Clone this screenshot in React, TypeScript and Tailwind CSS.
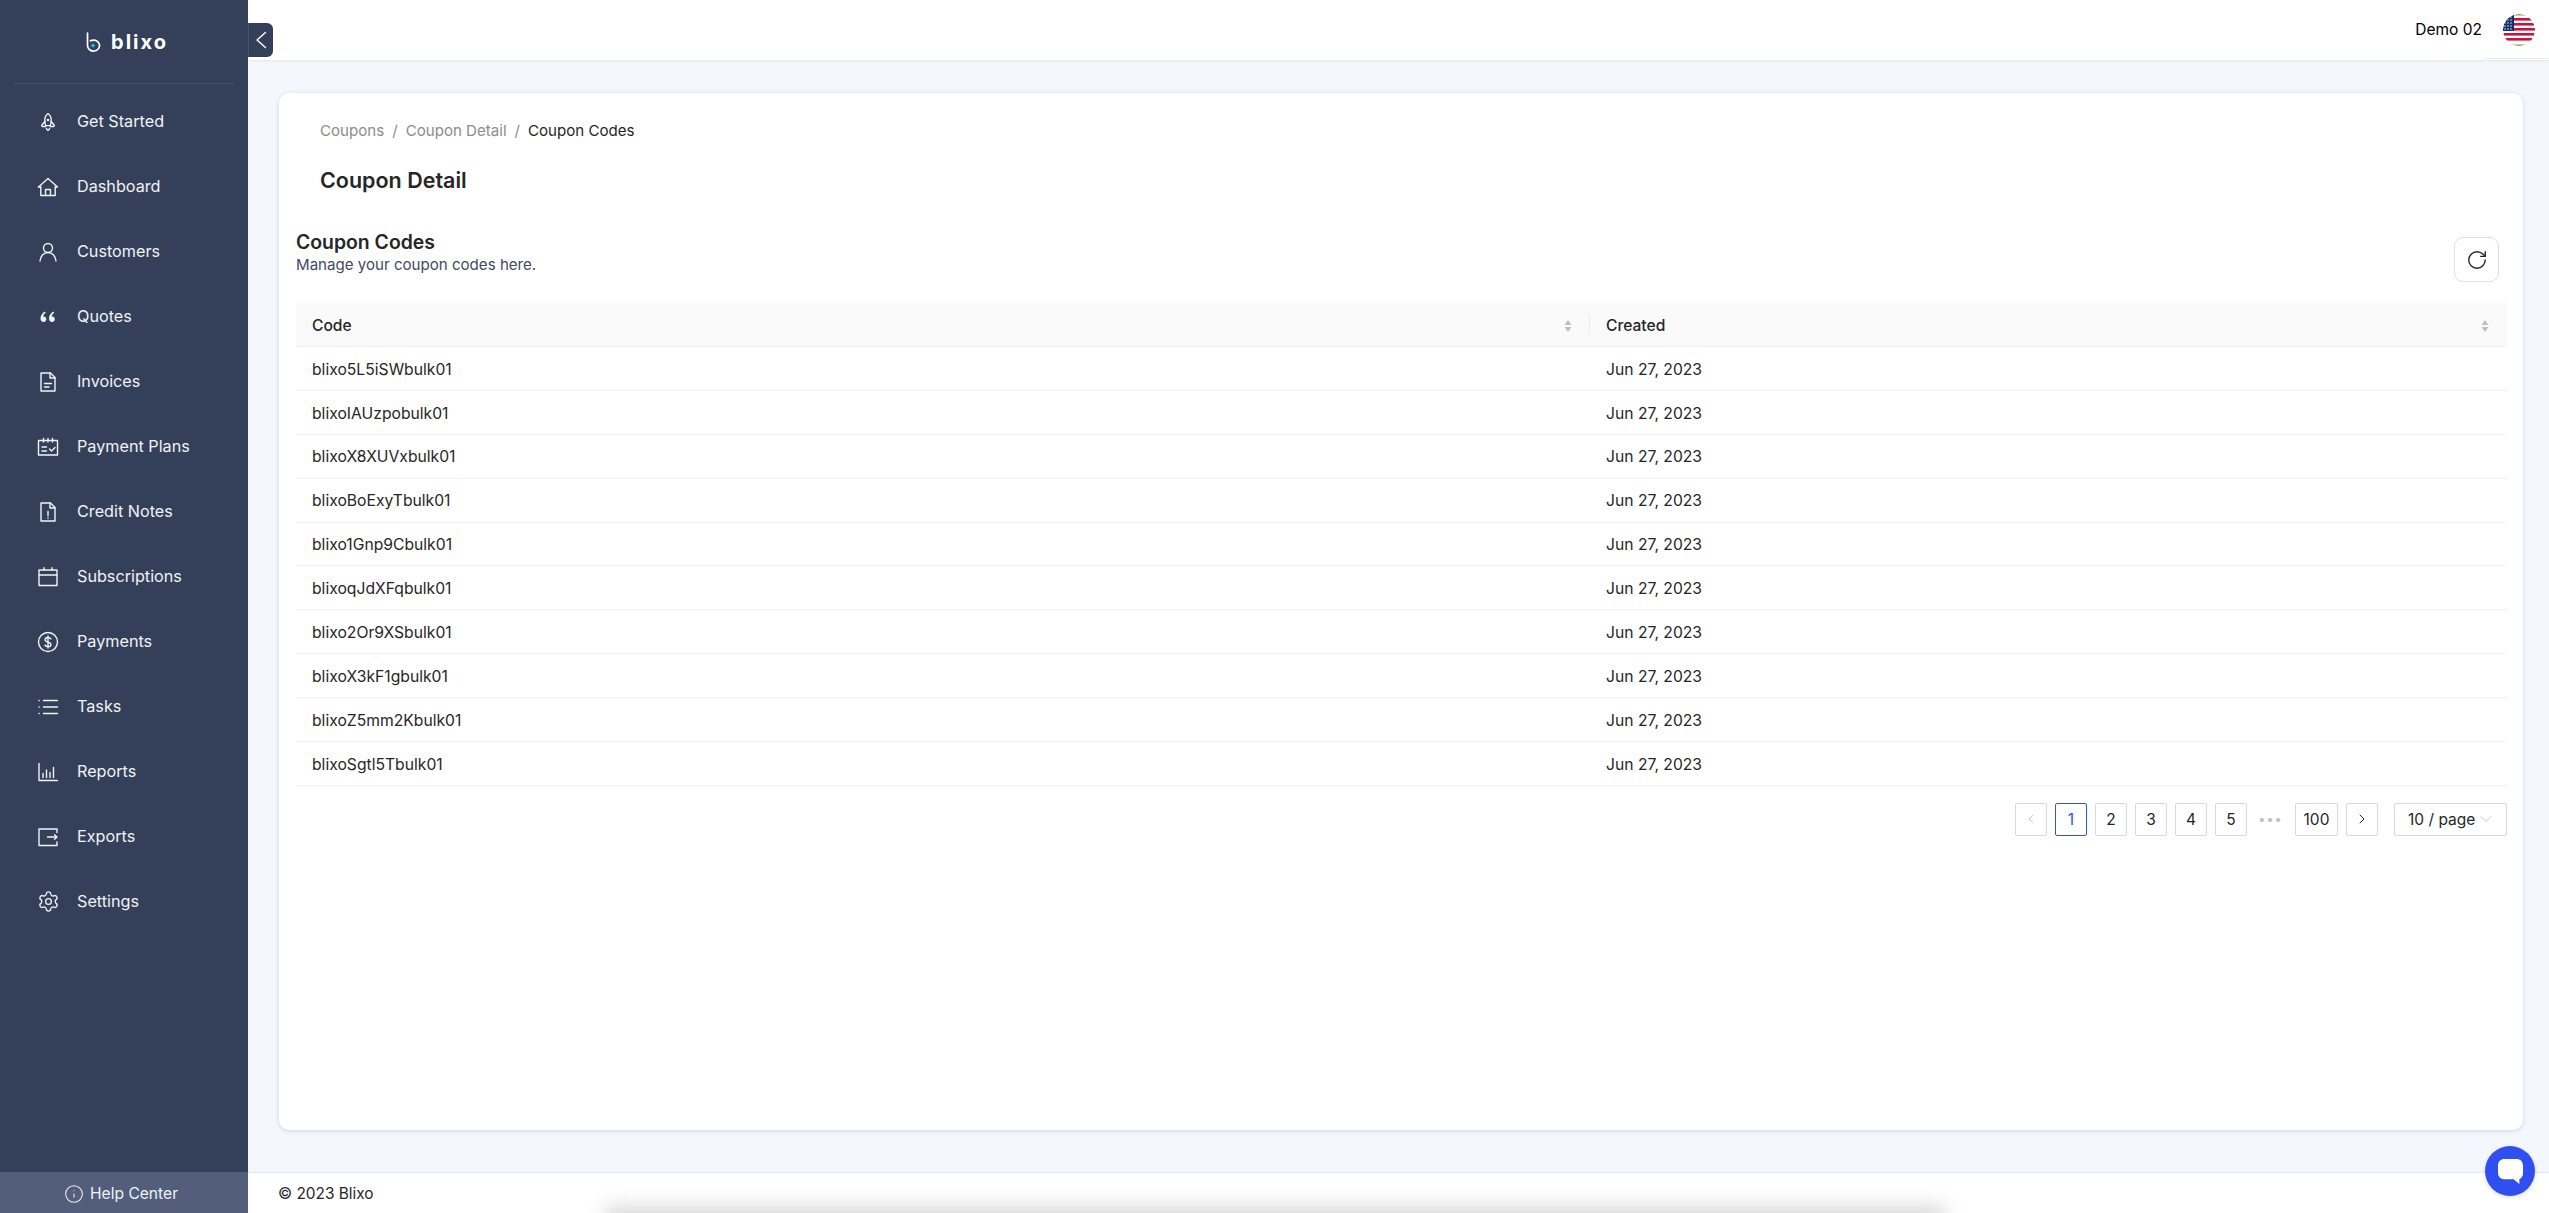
import { ChevronLeft, ChevronRight, ChevronDown, RotateCw, Info, Settings } from "lucide-react";
import type { ReactNode } from "react";

const Ic = ({ children }: { children: ReactNode }) => (
  <svg viewBox="0 0 24 24" width="24" height="24" fill="none" stroke="currentColor" strokeWidth="1.4" strokeLinecap="round" strokeLinejoin="round">
    {children}
  </svg>
);

const navItems: { label: string; icon: ReactNode }[] = [
  {
    label: "Get Started",
    icon: (
      <Ic>
        <path d="M12 3.500c-2.300 1.700-3.200 4-3.200 6.600 0 2.200.4 4 .9 5.500h4.600c.5-1.500.9-3.300.9-5.500 0-2.600-.9-4.900-3.200-6.600z" />
        <path d="M8.900 11.500 5.900 15c-.5.700 0 1.500.8 1.500h3M15.100 11.500l3 3.500c.5.700 0 1.500-.8 1.500h-3" />
        <path d="M10.400 18.500c.4.900.9 1.500 1.600 2 .7-.5 1.200-1.100 1.600-2" />
        <circle cx="12" cy="10" r=".6" />
      </Ic>
    ),
  },
  {
    label: "Dashboard",
    icon: (
      <Ic>
        <path d="M2.500 12 12 3.500l9.500 8.500h-2.300" />
        <path d="M2.500 12h2.300" />
        <path d="M4.800 12v8.500h14.400V12" />
        <path d="M9.500 20.500V14.500h5v6" />
      </Ic>
    ),
  },
  {
    label: "Customers",
    icon: (
      <Ic>
        <circle cx="12" cy="8" r="4.500" />
        <path d="M4 21c.4-4.800 3.500-8.500 8-8.500s7.600 3.700 8 8.500" />
      </Ic>
    ),
  },
  {
    label: "Quotes",
    icon: (
      <svg viewBox="0 0 24 24" width="24" height="24" fill="currentColor">
        <path d="M9 6.500C6.300 8 4.500 10.500 4.500 13.500c0 2.200 1.300 3.600 3 3.600 1.600 0 2.800-1.200 2.800-2.800 0-1.600-1.100-2.700-2.500-2.700-.3 0-.6 0-.8.100.3-1.500 1.300-3 2.700-4L9 6.500z" />
        <path d="M17.500 6.500C14.800 8 13 10.500 13 13.500c0 2.200 1.300 3.600 3 3.600 1.600 0 2.800-1.200 2.800-2.800 0-1.600-1.100-2.700-2.500-2.700-.3 0-.6 0-.8.100.3-1.500 1.300-3 2.700-4l-.7-1.200z" />
      </svg>
    ),
  },
  {
    label: "Invoices",
    icon: (
      <Ic>
        <path d="M5 3h9.500L19 7.500V21H5z" />
        <path d="M14 3v5h5" />
        <path d="M8.500 13.500h7M8.500 17h4.500" />
      </Ic>
    ),
  },
  {
    label: "Payment Plans",
    icon: (
      <Ic>
        <path d="M2.500 5.500h19v14.500h-19z" />
        <path d="M7.500 3.500V7M12 3.500V7M16.500 3.500V7" />
        <path d="M6 12h4.500M6 16h4.500M13.500 14l2 2 3.500-3.500" />
      </Ic>
    ),
  },
  {
    label: "Credit Notes",
    icon: (
      <Ic>
        <path d="M5 3h9.500L19 7.500V21H5z" />
        <path d="M14 3v5h5" />
        <path d="M12 11.500v4.500M12 18.200v.3" />
      </Ic>
    ),
  },
  {
    label: "Subscriptions",
    icon: (
      <Ic>
        <path d="M3 5h18v15.500H3z" />
        <path d="M3 10h18M8 2.800V5M16 2.800V5" />
      </Ic>
    ),
  },
  {
    label: "Payments",
    icon: (
      <Ic>
        <circle cx="12" cy="12" r="9.500" />
        <path d="M15 9c-.6-1-1.700-1.500-3-1.500-1.700 0-2.900.9-2.900 2.200 0 3.100 5.800 1.600 5.800 4.700 0 1.300-1.200 2.200-2.900 2.200-1.400 0-2.500-.6-3-1.500M12 6v12" />
      </Ic>
    ),
  },
  {
    label: "Tasks",
    icon: (
      <Ic>
        <path d="M7.500 5.500h14M7.500 12h14M7.500 18.500h14M3 5.500h.2M3 12h.2M3 18.500h.2" />
      </Ic>
    ),
  },
  {
    label: "Reports",
    icon: (
      <Ic>
        <path d="M3 3.500V20.500h18.500" />
        <path d="M7 17.500v-4M10.500 17.500V10M14 17.500v-5M17.500 17.500V7.500" />
      </Ic>
    ),
  },
  {
    label: "Exports",
    icon: (
      <Ic>
        <path d="M21 7.500V4H3v16.500h18V17" />
        <path d="M11.500 12H21M18.500 9.800 21 12l-2.500 2.200" />
      </Ic>
    ),
  },
  {
    label: "Settings",
    icon: <Settings size={23} strokeWidth={1.4} />,
  },
];

const codes = [
  "blixo5L5iSWbulk01",
  "blixoIAUzpobulk01",
  "blixoX8XUVxbulk01",
  "blixoBoExyTbulk01",
  "blixo1Gnp9Cbulk01",
  "blixoqJdXFqbulk01",
  "blixo2Or9XSbulk01",
  "blixoX3kF1gbulk01",
  "blixoZ5mm2Kbulk01",
  "blixoSgtl5Tbulk01",
];

const SortIcon = () => (
  <svg viewBox="0 0 8 14" width="8" height="14" className="text-[#bfbfbf]" fill="currentColor">
    <path d="M4 1 7.500 6h-7zM4 13 .5 8h7z" />
  </svg>
);

const PageBtn = ({ children, active, muted }: { children: ReactNode; active?: boolean; muted?: boolean }) => (
  <button
    className={
      active
        ? "h-[33px] min-w-[32px] px-1 flex items-center justify-center rounded-[2px] border border-[#2f54eb] text-[#2f54eb] bg-white"
        : muted
          ? "h-[33px] min-w-[32px] px-1 flex items-center justify-center rounded-[2px] border border-[#d9d9d9] text-[#bfbfbf] bg-white"
          : "h-[33px] min-w-[32px] px-1 flex items-center justify-center rounded-[2px] border border-[#d9d9d9] text-[#262626] bg-white"
    }
  >
    {children}
  </button>
);

const Flag = () => (
  <svg viewBox="0 0 32 32" width="32" height="32" className="rounded-full">
    <clipPath id="flag-c">
      <circle cx="16" cy="16" r="16" />
    </clipPath>
    <g clipPath="url(#flag-c)">
      <rect width="32" height="32" fill="#fff" />
      <rect width="32" height="1.500" fill="#7fae5a" />
      <rect y="30.500" width="32" height="1.500" fill="#7fae5a" />
      {[4, 9, 14, 19, 24].map((y) => (
        <rect key={y} y={y} width="32" height="2.600" fill="#c8143c" />
      ))}
      <rect width="11" height="17" fill="#12306e" />
      {[3, 6, 9, 12, 15].map((y) =>
        [2, 5, 8].map((x) => <circle key={`${x}-${y}`} cx={x} cy={y} r=".7" fill="#fff" />)
      )}
    </g>
  </svg>
);

export default function App() {
  return (
    <div className="flex h-[1213px] w-full overflow-hidden bg-[#f5f7fe] text-[#262626] font-['Inter',sans-serif]">
      <aside className="w-[248px] shrink-0 flex flex-col bg-[#344059] text-[#f0f2f6]">
        <div className="mx-[14px] h-[84px] flex items-center justify-center gap-[10px] border-b border-[#48536c] pl-[6px]">
          <svg viewBox="0 0 15 20" width="15" height="20" fill="none" stroke="#fff" strokeWidth="1.700" strokeLinecap="round">
            <path d="M1.500 1v12.500a6 5.500 0 1 0 3-4.700" />
            <path d="M5.500 13.500h3M7 12v3" stroke="#22c1ee" strokeWidth="1.400" />
          </svg>
          <span className="text-[20px] font-bold tracking-[2px] text-white leading-none">blixo</span>
        </div>
        <nav className="flex-1 flex flex-col pt-[5px]">
          {navItems.map((n) => (
            <div key={n.label} className="h-[65px] flex items-center pl-[36px] gap-[17px] text-[16.2px]">
              <span className="w-[24px] flex justify-center">{n.icon}</span>
              <span>{n.label}</span>
            </div>
          ))}
        </nav>
        <div className="h-[41px] bg-[#525e7b] flex items-center justify-center gap-[6px] text-[15.6px] pt-[2px] pr-[6px]">
          <Info size={20} strokeWidth={1.25} />
          <span>Help Center</span>
        </div>
      </aside>

      <div className="flex-1 min-w-0 flex flex-col relative">
        <header className="relative h-[61px] shrink-0 bg-white border-b border-[#ebebeb] shadow-[0_1px_2px_rgba(0,0,0,0.04)] flex items-center justify-end pr-[14px]">
          <span className="text-[15.5px] text-black mr-[21px]">Demo 02</span>
          <Flag />
          <span className="absolute right-0 bottom-[1px] w-[66px] h-px bg-[#ececec]" />
        </header>
        <button className="absolute left-0 top-[23px] h-[34px] w-[25px] rounded-r-[6px] bg-[#344059] border-l border-[#48536c] flex items-center justify-center text-white">
          <svg viewBox="0 0 12 18" width="12" height="18" fill="none" stroke="currentColor" strokeWidth="1.400" strokeLinecap="round" strokeLinejoin="round">
            <path d="M10.500 1.500 2 9l8.500 7.500" />
          </svg>
        </button>

        <main className="flex-1 min-h-0 pt-[32px] pb-[42px] pl-[31px] pr-[26px]">
          <div className="h-full bg-white rounded-[10px] shadow-[0_1px_4px_rgba(40,50,80,0.18)] pt-[26px] pl-[17px] pr-[16px]">
            <div className="pl-[24px]">
              <div className="flex items-center text-[15.1px] leading-[24px] text-[#8c8c8c] gap-[8px]">
                <span>Coupons</span>
                <span>/</span>
                <span>Coupon Detail</span>
                <span>/</span>
                <span className="text-[#262626]">Coupon Codes</span>
              </div>
              <h1 className="mt-[22px] text-[21.5px] leading-[30px] font-semibold text-[#262626]">Coupon Detail</h1>
            </div>
            <div className="mt-[35px] flex items-start justify-between pr-[8px]">
              <div>
                <h2 className="text-[19.4px] leading-[24px] font-semibold text-[#262626]">Coupon Codes</h2>
                <p className="text-[15.1px] leading-[22px] text-[#3f4a63]">Manage your coupon codes here.</p>
              </div>
              <button className="mt-[7px] w-[45px] h-[45px] rounded-[9px] border border-[#e0e0e0] flex items-center justify-center text-[#262626] bg-white">
                <RotateCw size={22} strokeWidth={1.5} />
              </button>
            </div>
            <div className="mt-[21px]">
              <div className="flex h-[44px] bg-[#fafafa] border-b border-[#f0f0f0] text-[15.6px] font-medium">
                <div className="w-[1294px] flex items-center justify-between pl-[16px] pr-[18px] pt-[3px] relative">
                  <span>Code</span>
                  <SortIcon />
                  <span className="absolute right-0 top-[11px] bottom-[11px] w-px bg-[#ededed]" />
                </div>
                <div className="flex-1 flex items-center justify-between pl-[16px] pr-[18px] pt-[3px]">
                  <span>Created</span>
                  <SortIcon />
                </div>
              </div>
              {codes.map((c) => (
                <div key={c} className="flex h-[43.9px] border-b border-[#f0f0f0] text-[15.7px] pt-[2px]">
                  <div className="w-[1294px] flex items-center pl-[16px]">{c}</div>
                  <div className="flex-1 flex items-center pl-[16px]">Jun 27, 2023</div>
                </div>
              ))}
            </div>
            <div className="mt-[17px] flex items-center justify-end">
              <div className="flex items-center gap-[8px] text-[15.5px]">
                <PageBtn muted>
                  <ChevronLeft size={16} strokeWidth={1.25} />
                </PageBtn>
                <PageBtn active>1</PageBtn>
                <PageBtn>2</PageBtn>
                <PageBtn>3</PageBtn>
                <PageBtn>4</PageBtn>
                <PageBtn>5</PageBtn>
                <span className="w-[32px] text-center text-[#bfbfbf] tracking-[2px] text-[13px] font-bold">•••</span>
                <div className="w-[43px] [&>button]:w-full">
                  <PageBtn>100</PageBtn>
                </div>
                <PageBtn>
                  <ChevronRight size={16} strokeWidth={1.5} />
                </PageBtn>
                <div className="ml-[8px] h-[33px] w-[113px] border border-[#d9d9d9] rounded-[2px] flex items-center justify-between pl-[13px] pr-[10px]">
                  <span>10 / page</span>
                  <ChevronDown size={20} strokeWidth={1} className="text-[#bfbfbf]" />
                </div>
              </div>
            </div>
          </div>
        </main>

        <footer className="relative h-[41px] shrink-0 bg-white border-t border-[#e8e8ee] flex items-center pl-[30px] pt-[2px] text-[15.4px] text-[#262626] overflow-hidden">
          <span>© 2023 Blixo</span>
          <div className="absolute left-[357px] right-[604px] top-[33px] h-[40px] bg-[#d9d9d9] blur-[10px]" />
        </footer>
        <button className="absolute right-[14px] bottom-[17px] w-[50px] h-[50px] rounded-full bg-[#2f4ff0] flex items-center justify-center shadow-[0_1px_4px_rgba(0,0,0,0.15)]">
          <svg viewBox="0 0 24 24" width="25" height="25" fill="#fff">
            <path d="M6.500 0h11C21.500 0 24 2.500 24 6.500v7c0 3-1.500 5.200-3.500 6V24l-5.500-4.500H6.500C2.500 19.500 0 17 0 13.500v-7C0 2.500 2.500 0 6.500 0z" />
          </svg>
        </button>
      </div>
    </div>
  );
}
